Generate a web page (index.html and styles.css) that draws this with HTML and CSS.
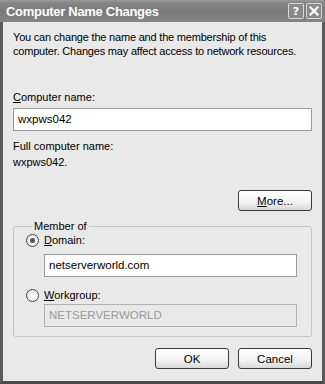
FILE: index.html
```html
<!DOCTYPE html>
<html>
<head>
<meta charset="utf-8">
<link rel="stylesheet" href="styles.css">
</head>
<body>
<div class="window">
  <div class="titlebar">
    <span class="title">Computer Name Changes</span>
    <div class="tbtns">
      <span class="tbtn">?</span>
      <span class="tbtn"><svg width="10" height="10" viewBox="0 0 10 10"><path d="M1.5 1.5 L8.5 8.5 M8.5 1.5 L1.5 8.5" stroke="#fff" stroke-width="2.2" stroke-linecap="square"/></svg></span>
    </div>
  </div>
  <div class="content">
    <p class="intro">You can change the name and the membership of this<br>computer. Changes may affect access to network resources.</p>
    <div class="label first"><u>C</u>omputer name:</div>
    <div class="input">wxpws042</div>
    <div class="label full">Full computer name:</div>
    <div class="label">wxpws042.</div>
    <div class="row-right more-row"><button class="btn"><u>M</u>ore...</button></div>
    <fieldset class="group">
      <legend>Member of</legend>
      <div class="radio-row"><span class="radio checked"></span><span><u>D</u>omain:</span></div>
      <div class="input sub">netserverworld.com</div>
      <div class="radio-row second"><span class="radio"></span><span><u>W</u>orkgroup:</span></div>
      <div class="input sub disabled">NETSERVERWORLD</div>
    </fieldset>
    <div class="row-right actions"><button class="btn">OK</button><button class="btn">Cancel</button></div>
  </div>
</div>
</body>
</html>
```
FILE: styles.css
```css
* { box-sizing: border-box; }
html, body { margin: 0; padding: 0; background: #fff; }
body { font-family: "Liberation Sans", Arial, sans-serif; font-size: 11px; color: #000; }
.window {
  width: 325px; height: 384px;
  background: #e9e9e9;
  border-left: 3px solid #5a5a5a;
  border-right: 3px solid #5a5a5a;
  border-bottom: 3px solid #4a4a4a;
  display: flex; flex-direction: column;
}
.titlebar {
  height: 22px;
  margin: 0 -3px;
  background: linear-gradient(#9a9a9a 0, #858585 3px, #7a7a7a 50%, #858585 100%);
  display: flex; align-items: center; justify-content: space-between;
  padding: 0 3px 0 6px;
}
.title { font-family: "Liberation Sans", Arial, sans-serif; font-weight: bold; font-size: 13px; color: #fff; letter-spacing: -0.3px; }
.tbtns { display: flex; gap: 2px; }
.tbtn {
  width: 16px; height: 16px; border: 1px solid #d8d8d8; border-radius: 2px;
  background: #8a8a8a; color: #fff; font-weight: bold; font-size: 11px;
  display: flex; align-items: center; justify-content: center;
  font-family: "DejaVu Sans", sans-serif;
}
.content { padding: 0 10px; display: flex; flex-direction: column; flex: 1; }
.intro { margin: 8px 0 0; line-height: 14px; letter-spacing: -0.2px; white-space: nowrap; }
.label { line-height: 15px; }
.label.first { margin-top: 32px; }
.input {
  height: 23px; margin-top: 3px; background: #fff; border: 1px solid #9a9a9a;
  padding: 0 4px; line-height: 21px; font-size: 11.5px;
}
.label.full { margin-top: 8px; }
.label.full + .label { margin-top: 1px; }
.row-right { display: flex; justify-content: flex-end; gap: 9px; }
.more-row { margin-top: 20px; }
.btn {
  width: 74px; height: 21px; padding: 0;
  font-family: "Liberation Sans", Arial, sans-serif; font-size: 11.5px; color: #000;
  border: 1px solid #3a3a3a; border-radius: 3px;
  background: linear-gradient(#ffffff, #f2f2f2 60%, #d8d8d8);
}
.group {
  margin: 8px 0 0; padding: 0 14px 9px 12px;
  border: 1px solid #c6c6c6; border-radius: 3px;
}
.group legend { padding: 0 2px; margin-left: 6px; color: #000; line-height: 14px; }
.radio-row { display: flex; align-items: center; gap: 5px; height: 14px; margin-top: 0; }
.radio-row.second { margin-top: 11px; }
.radio {
  width: 13px; height: 13px; border-radius: 50%; border: 1px solid #444;
  background: radial-gradient(circle at 60% 60%, #ffffff, #e0e0e0);
  display: flex; align-items: center; justify-content: center;
}
.radio.checked::after { content: ""; width: 5px; height: 5px; border-radius: 50%; background: #555; }
.input.sub { margin-left: 18px; margin-top: 7px; }
.input.sub.disabled { margin-top: 2px; background: #e9e9e9; color: #9a9a9a; border-color: #b0b0b0; }
.actions { margin-top: 11px; }
```
